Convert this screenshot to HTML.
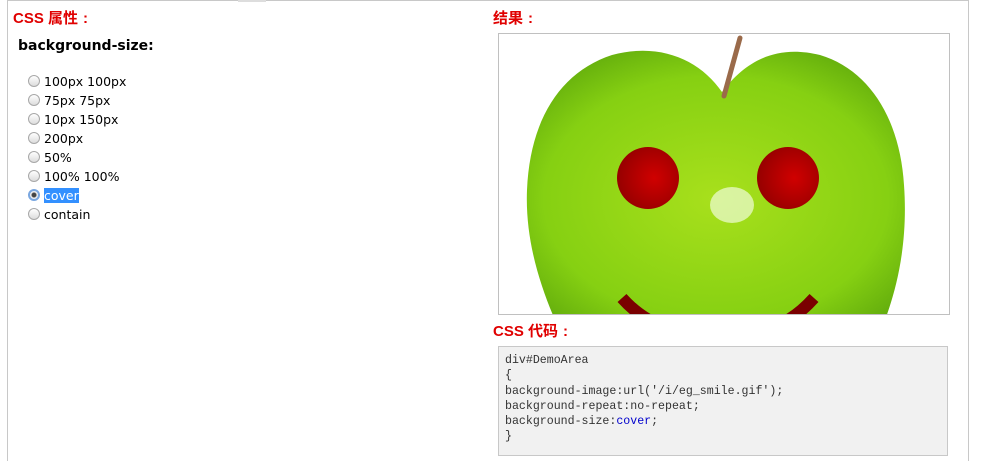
<!DOCTYPE html>
<html><head><meta charset="utf-8"><style>
body{margin:0;width:984px;height:447px;overflow:hidden;background:#fff;position:relative;font-family:Verdana,"DejaVu Sans","Liberation Sans",sans-serif;}
.frame{position:absolute;left:7px;top:0;width:960px;height:460px;border:1px solid #c8c8c8;border-bottom:none;}
.h{position:absolute;color:#e00000;font-weight:bold;font-size:15px;font-family:"Liberation Sans","Noto Sans CJK SC",sans-serif;line-height:20px;}
.lbl{position:absolute;left:18px;top:38px;font-weight:bold;font-size:14px;color:#000;}
.opt{position:absolute;left:28px;font-size:12.5px;color:#000;height:19px;line-height:19px;}
.r{display:inline-block;width:12px;height:12px;border-radius:50%;border:1px solid #a8a8a8;background:linear-gradient(#fff,#dcdcdc);vertical-align:-1px;margin-right:4px;box-sizing:border-box;}
.sel{background:#3390ff;color:#fff;}
.box{position:absolute;left:498px;top:33px;width:450px;height:280px;border:1px solid #c0c0c0;overflow:hidden;}
.code{position:absolute;left:498px;top:346px;width:450px;height:110px;border:1px solid #c8c8c8;background:#f1f1f1;font-family:"Liberation Mono",monospace;font-size:11.6px;line-height:15.3px;color:#333;padding:6px 0 0 6px;box-sizing:border-box;white-space:pre;}
.c{display:inline-block;width:15px;text-align:center;}
</style></head><body>
<div class="frame"></div>
<div style="position:absolute;left:238px;top:0;width:28px;height:2px;background:#ddd"></div>
<div class="h" style="left:13px;top:9px">CSS 属性<span class="c">:</span></div>
<div class="lbl">background-size:</div>
<div class="opt" style="top:72px"><span class="r"></span>100px 100px</div>
<div class="opt" style="top:91px"><span class="r"></span>75px 75px</div>
<div class="opt" style="top:110px"><span class="r"></span>10px 150px</div>
<div class="opt" style="top:129px"><span class="r"></span>200px</div>
<div class="opt" style="top:148px"><span class="r"></span>50%</div>
<div class="opt" style="top:167px"><span class="r"></span>100% 100%</div>
<div class="opt" style="top:186px"><span class="r" style="border:2px solid #7aa7e0;background:radial-gradient(circle,#444 0 2px,#eee 3px)"></span><span class="sel">cover</span></div>
<div class="opt" style="top:205px"><span class="r"></span>contain</div>
<div class="h" style="left:493px;top:9px">结果<span class="c">:</span></div>
<div class="box">
<svg width="450" height="280" viewBox="499 34 450 280">
<defs><radialGradient id="g" cx="0.5" cy="0.55" r="0.65"><stop offset="0" stop-color="#a8e01c"/><stop offset="0.7" stop-color="#86d012"/><stop offset="1" stop-color="#5ea80c"/></radialGradient>
<radialGradient id="e" cx="0.6" cy="0.5" r="0.6"><stop offset="0" stop-color="#d00000"/><stop offset="1" stop-color="#960000"/></radialGradient></defs>
<path d="M722,92 C700,60 660,42 612,55 C560,72 530,120 527,190 C525,240 540,285 555,320 L885,320 C898,285 908,240 904,185 C900,120 870,70 820,55 C775,44 745,62 722,92Z" fill="url(#g)"/>
<ellipse cx="732" cy="205" rx="22" ry="18" fill="#f0fcd8" opacity="0.7"/>
<path d="M740,38 L724,96" stroke="#9a6a4a" stroke-width="5" stroke-linecap="round"/>
<circle cx="648" cy="178" r="31" fill="url(#e)"/>
<circle cx="788" cy="178" r="31" fill="url(#e)"/>
<path d="M622,298 Q640,318 662,326" stroke="#7a0000" stroke-width="12" fill="none"/>
<path d="M814,298 Q796,318 776,326" stroke="#7a0000" stroke-width="12" fill="none"/>
</svg></div>
<div class="h" style="left:493px;top:322px">CSS 代码<span class="c">:</span></div>
<div class="code">div#DemoArea
{
background-image:url('/i/eg_smile.gif');
background-repeat:no-repeat;
background-size:<span style="color:#0000cc">cover</span>;
}</div>
</body></html>
